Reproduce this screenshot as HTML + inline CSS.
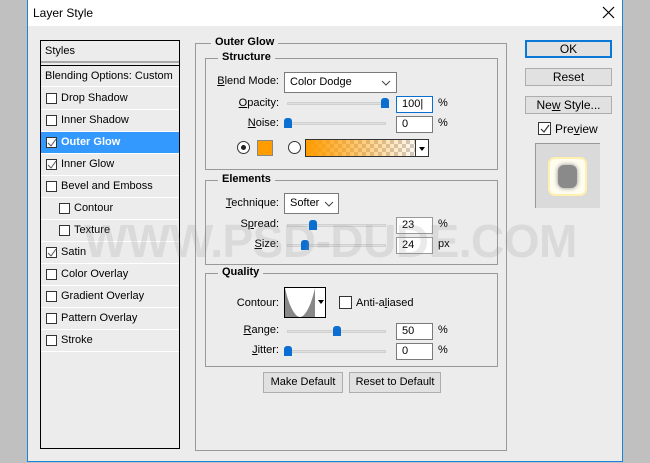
<!DOCTYPE html>
<html><head><meta charset="utf-8"><style>
*{box-sizing:border-box;margin:0;padding:0}
body{width:650px;height:463px;background:#c0c0c0;font-family:"Liberation Sans",sans-serif;font-size:11px;color:#000;position:relative;overflow:hidden}
.a{position:absolute}
#dlg{left:27px;top:0;width:596px;height:462px;background:#ececec;border:1px solid #1883d7;border-top:none}
#title{left:0;top:0;width:594px;height:26px;background:#fff}
.cb{position:absolute;width:11px;height:11px;border:1px solid #333;background:#fff}
.row{position:absolute;left:0;width:138px;height:22px;border-bottom:1px solid #fff;line-height:21px}
.row span{position:absolute;left:20px}
.box{position:absolute;border:1px solid #999}
.leg{position:absolute;background:#ececec;font-weight:bold;padding:0 4px;top:-8px}
.inp{position:absolute;background:#fff;border:1px solid #7a7a7a;height:17px;line-height:15px;padding-left:5px}
.track{position:absolute;height:3px;background:#e0e0e0;border:1px solid #d0d0d0}
.thumb{position:absolute;width:8px;height:10px;background:#0a6fd0;border-radius:3px 3px 0 0}
.btn{position:absolute;background:#e1e1e1;border:1px solid #adadad;text-align:center;line-height:16px;font-size:12px}
.lab{position:absolute;text-align:right}
u{text-decoration:underline}
</style></head><body>
<div id="dlg" class="a">
 <div id="title" class="a"><div class="a" style="left:5px;top:6px;font-size:12px">Layer Style</div>
  <svg class="a" style="left:574px;top:6px" width="13" height="13"><path d="M1 1L12 12M12 1L1 12" stroke="#000" stroke-width="1.2"/></svg></div>

 <div class="a" style="left:12px;top:40px;width:140px;height:409px;border:1px solid #000;background:#ececec">
  <div class="row" style="top:0;height:22px;border-bottom:2px solid #aaa"><span style="left:4px">Styles</span></div>
  <div class="row" style="top:24px;height:22px;border-top:1px solid #000"><span style="left:4px">Blending Options: Custom</span></div>
  <div class="row" style="top:47px"><div class="cb" style="left:5px;top:5px"></div><span>Drop Shadow</span></div>
  <div class="row" style="top:69px"><div class="cb" style="left:5px;top:5px"></div><span>Inner Shadow</span></div>
  <div class="row" style="top:91px;background:#3399ff;color:#fff;font-weight:bold"><div class="cb" style="left:5px;top:5px;border-color:#333"></div><svg class="a" style="left:6px;top:6px" width="10" height="10"><path d="M1 5L4 8L9 1" stroke="#555" fill="none"/></svg><span>Outer Glow</span></div>
  <div class="row" style="top:113px"><div class="cb" style="left:5px;top:5px"></div><svg class="a" style="left:6px;top:6px" width="10" height="10"><path d="M1 5L4 8L9 1" stroke="#555" fill="none"/></svg><span>Inner Glow</span></div>
  <div class="row" style="top:135px"><div class="cb" style="left:5px;top:5px"></div><span>Bevel and Emboss</span></div>
  <div class="row" style="top:157px"><div class="cb" style="left:18px;top:5px"></div><span style="left:33px">Contour</span></div>
  <div class="row" style="top:179px"><div class="cb" style="left:18px;top:5px"></div><span style="left:33px">Texture</span></div>
  <div class="row" style="top:201px"><div class="cb" style="left:5px;top:5px"></div><svg class="a" style="left:6px;top:6px" width="10" height="10"><path d="M1 5L4 8L9 1" stroke="#555" fill="none"/></svg><span>Satin</span></div>
  <div class="row" style="top:223px"><div class="cb" style="left:5px;top:5px"></div><span>Color Overlay</span></div>
  <div class="row" style="top:245px"><div class="cb" style="left:5px;top:5px"></div><span>Gradient Overlay</span></div>
  <div class="row" style="top:267px"><div class="cb" style="left:5px;top:5px"></div><span>Pattern Overlay</span></div>
  <div class="row" style="top:289px"><div class="cb" style="left:5px;top:5px"></div><span>Stroke</span></div>
 </div>

 <div class="box" style="left:167px;top:43px;width:312px;height:408px">
  <div class="leg" style="left:15px">Outer Glow</div>
 </div>
 <div class="box" style="left:177px;top:58px;width:293px;height:112px"><div class="leg" style="left:12px">Structure</div>
  <div class="lab" style="left:0;width:73px;top:16px"><u>B</u>lend Mode:</div>
  <div class="inp" style="left:78px;top:13px;width:113px;height:21px;line-height:19px">Color Dodge<svg class="a" style="left:96px;top:7px" width="10" height="6"><path d="M1 1L5 5L9 1" stroke="#444" fill="none"/></svg></div>
  <div class="lab" style="left:0;width:73px;top:38px"><u>O</u>pacity:</div>
  <div class="track" style="left:81px;top:43px;width:99px"></div><div class="thumb" style="left:175px;top:39px"></div>
  <div class="inp" style="left:190px;top:37px;width:37px;border-color:#0a6fd0">100|</div><div class="a" style="left:232px;top:38px">%</div>
  <div class="lab" style="left:0;width:73px;top:58px"><u>N</u>oise:</div>
  <div class="track" style="left:81px;top:63px;width:99px"></div><div class="thumb" style="left:78px;top:59px"></div>
  <div class="inp" style="left:190px;top:57px;width:37px">0</div><div class="a" style="left:232px;top:58px">%</div>
  <div class="a" style="left:31px;top:82px;width:13px;height:13px;border:1px solid #333;border-radius:50%;background:#fff"><div class="a" style="left:3px;top:3px;width:5px;height:5px;border-radius:50%;background:#222"></div></div>
  <div class="a" style="left:51px;top:81px;width:16px;height:16px;border:1px solid #888;background:#ff9c00"></div>
  <div class="a" style="left:82px;top:82px;width:13px;height:13px;border:1px solid #333;border-radius:50%;background:#fff"></div>
  <div class="a" style="left:99px;top:80px;width:124px;height:18px;border:1px solid #333;background:linear-gradient(90deg,#ff9c00,rgba(255,156,0,0) 95%),repeating-conic-gradient(#ccc 0 25%,#fff 0 50%) 0 0/8px 8px"></div>
  <div class="a" style="left:209px;top:80px;width:14px;height:18px;border:1px solid #333;background:#fff"><div class="a" style="left:3px;top:7px;border:3px solid transparent;border-top:4px solid #000"></div></div>
 </div>

 <div class="box" style="left:177px;top:180px;width:293px;height:85px"><div class="leg" style="left:12px">Elements</div>
  <div class="lab" style="left:0;width:73px;top:16px"><u>T</u>echnique:</div>
  <div class="inp" style="left:78px;top:12px;width:55px;height:21px;line-height:19px">Softer<svg class="a" style="left:39px;top:7px" width="10" height="6"><path d="M1 1L5 5L9 1" stroke="#444" fill="none"/></svg></div>
  <div class="lab" style="left:0;width:73px;top:37px">S<u>p</u>read:</div>
  <div class="track" style="left:81px;top:43px;width:99px"></div><div class="thumb" style="left:103px;top:39px"></div>
  <div class="inp" style="left:190px;top:36px;width:37px;border-color:#999">23</div><div class="a" style="left:232px;top:37px">%</div>
  <div class="lab" style="left:0;width:73px;top:57px"><u>S</u>ize:</div>
  <div class="track" style="left:81px;top:63px;width:99px"></div><div class="thumb" style="left:95px;top:59px"></div>
  <div class="inp" style="left:190px;top:56px;width:37px;border-color:#999">24</div><div class="a" style="left:232px;top:57px">px</div>
 </div>

 <div class="box" style="left:177px;top:273px;width:293px;height:94px"><div class="leg" style="left:12px">Quality</div>
  <div class="lab" style="left:0;width:73px;top:23px">Contour:</div>
  <div class="a" style="left:78px;top:13px;width:42px;height:31px;border:1px solid #000;background:#fff">
   <svg width="30" height="29"><path d="M0 0L0 29L30 29L30 0C26 18 20 29 15 29C10 29 4 18 0 0Z" fill="#888"/></svg>
   <div class="a" style="left:33px;top:12px;border:3px solid transparent;border-top:4px solid #000"></div></div>
  <div class="cb" style="left:133px;top:22px;width:13px;height:13px"></div><div class="a" style="left:150px;top:23px">Anti-a<u>l</u>iased</div>
  <div class="lab" style="left:0;width:73px;top:50px"><u>R</u>ange:</div>
  <div class="track" style="left:81px;top:56px;width:99px"></div><div class="thumb" style="left:127px;top:52px"></div>
  <div class="inp" style="left:190px;top:49px;width:37px">50</div><div class="a" style="left:232px;top:50px">%</div>
  <div class="lab" style="left:0;width:73px;top:70px"><u>J</u>itter:</div>
  <div class="track" style="left:81px;top:76px;width:99px"></div><div class="thumb" style="left:78px;top:72px"></div>
  <div class="inp" style="left:190px;top:69px;width:37px">0</div><div class="a" style="left:232px;top:70px">%</div>
 </div>
 <div class="btn" style="left:235px;top:372px;width:80px;height:21px;line-height:19px;font-size:11px">Make Default</div>
 <div class="btn" style="left:321px;top:372px;width:92px;height:21px;line-height:19px;font-size:11px">Reset to Default</div>

 <div class="btn" style="left:497px;top:40px;width:87px;height:18px;border:2px solid #0a78d7;line-height:14px">OK</div>
 <div class="btn" style="left:497px;top:68px;width:87px;height:18px">Reset</div>
 <div class="btn" style="left:497px;top:96px;width:87px;height:18px">Ne<u>w</u> Style...</div>
 <div class="cb" style="left:510px;top:122px;width:13px;height:13px"></div>
 <svg class="a" style="left:511px;top:123px" width="12" height="12"><path d="M2 6L5 9L10 2" stroke="#333" fill="none" stroke-width="1.2"/></svg>
 <div class="a" style="left:527px;top:122px;font-size:12px">Pre<u>v</u>iew</div>
 <div class="a" style="left:507px;top:143px;width:65px;height:65px;background:#dadada;border-left:1px solid #999;border-top:1px solid #999">
  <div class="a" style="left:12px;top:13px;width:39px;height:39px;border-radius:7px;background:#fffdf0;border:2px solid #fff0b0"><div class="a" style="left:8px;top:6px;width:19px;height:23px;border-radius:6px;background:#8a8a8a;box-shadow:0 0 5px #888"></div></div>
 </div>
</div>
<div class="a" style="left:84px;top:214px;font-size:46px;font-weight:bold;color:rgba(140,140,140,0.18);white-space:nowrap;letter-spacing:-0.5px">WWW.PSD-DUDE.COM</div>
</body></html>
